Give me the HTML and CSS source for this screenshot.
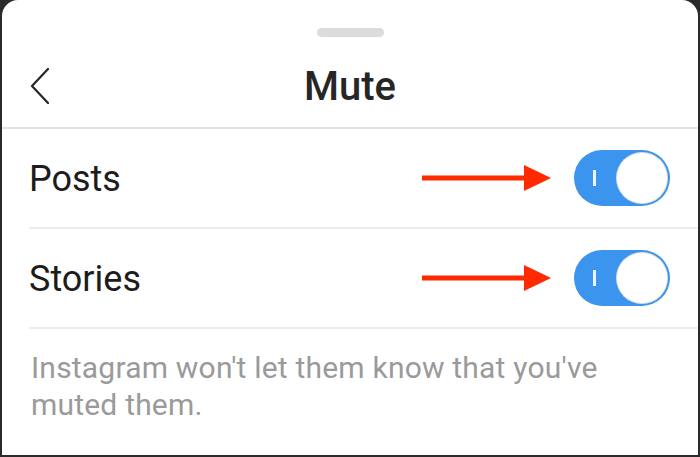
FILE: index.html
```html
<!DOCTYPE html>
<html lang="en">
<head>
    <meta charset="UTF-8">
    <meta name="viewport" content="width=device-width, initial-scale=1.0">
    <title>Mute</title>
    <link rel="stylesheet" href="styles.css">
</head>
<body>
    <div class="sheet">
        <div class="grabber"></div>

        <header class="nav">
            <a class="back" href="#" aria-label="Back">
                <svg width="20" height="36" viewBox="0 0 20 36">
                    <path d="M18 1 L2 18 L18 35" fill="none" stroke="#262626" stroke-width="2.2" stroke-linecap="round" stroke-linejoin="round"/>
                </svg>
            </a>
            <h1>Mute</h1>
            <span></span>
        </header>

        <div class="row">
            <span class="label">Posts</span>
            <svg class="arrow" width="130" height="28" viewBox="0 0 130 28">
                <rect x="0" y="11.5" width="106" height="5" fill="#ff2a00"/>
                <polygon points="102,1 129,14 102,27" fill="#ff2a00"/>
            </svg>
            <div class="toggle on">
                <span class="mark"></span>
                <span class="knob"></span>
            </div>
        </div>

        <div class="row">
            <span class="label">Stories</span>
            <svg class="arrow" width="130" height="28" viewBox="0 0 130 28">
                <rect x="0" y="11.5" width="106" height="5" fill="#ff2a00"/>
                <polygon points="102,1 129,14 102,27" fill="#ff2a00"/>
            </svg>
            <div class="toggle on">
                <span class="mark"></span>
                <span class="knob"></span>
            </div>
        </div>

        <p class="note">Instagram won't let them know that you've muted them.</p>
    </div>
</body>
</html>
```

FILE: styles.css
```css
* {
    margin: 0;
    padding: 0;
    box-sizing: border-box;
}

body {
    font-family: Roboto, 'Liberation Sans', Arial, sans-serif;
    background: #2a2a2a;
    height: 457px;
    overflow: hidden;
}

.sheet {
    background: #fff;
    margin: 0 2px;
    height: 455px;
    border-radius: 16px 16px 0 0;
    overflow: hidden;
}

.grabber {
    width: 67px;
    height: 9px;
    margin: 28px auto 0;
    border-radius: 5px;
    background: #dcdcdc;
}

.nav {
    display: grid;
    grid-template-columns: 1fr auto 1fr;
    align-items: center;
    height: 92px;
    padding: 7px 28px 0;
    border-bottom: 2px solid #e3e3e3;
}

.back {
    display: flex;
    width: 20px;
}

.nav h1 {
    font-size: 40px;
    font-weight: 500;
    color: #262626;
    padding-top: 2px;
}

.row {
    display: flex;
    align-items: center;
    height: 100px;
    margin-left: 27px;
    padding-right: 28px;
    border-bottom: 2px solid #ededed;
}

.label {
    flex: 1;
    font-size: 36px;
    color: #1c1c1c;
    padding-top: 2px;
}

.arrow {
    margin-right: 22px;
}

.toggle {
    display: flex;
    align-items: center;
    width: 96px;
    height: 56px;
    padding: 2px 2px 2px 19px;
    border-radius: 28px;
    background: #3b95ee;
}

.toggle .mark {
    width: 2.5px;
    height: 16px;
    background: rgba(255, 255, 255, 0.9);
}

.toggle .knob {
    margin-left: auto;
    width: 52px;
    height: 52px;
    border-radius: 50%;
    background: #fff;
    border: 1px solid rgba(0, 0, 0, 0.12);
}

.note {
    padding: 20px 29px 0;
    font-size: 30px;
    line-height: 37px;
    letter-spacing: 0.2px;
    color: #9a9a9a;
}
```
